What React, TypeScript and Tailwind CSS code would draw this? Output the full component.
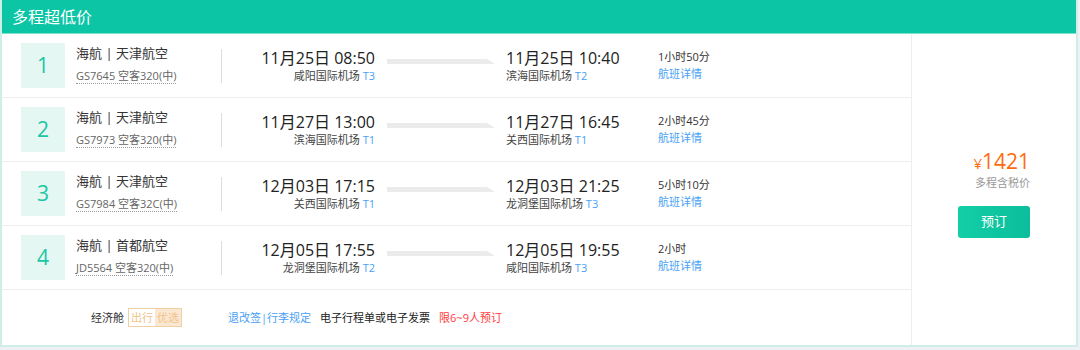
import React from "react";

type Flight = {
  no: number;
  airline: string;
  code: string;
  depTime: string;
  depPort: string;
  depTerm: string;
  arrTime: string;
  arrPort: string;
  arrTerm: string;
  duration: string;
};

const flights: Flight[] = [
  { no: 1, airline: "海航 | 天津航空", code: "GS7645 空客320(中)", depTime: "11月25日 08:50", depPort: "咸阳国际机场", depTerm: "T3", arrTime: "11月25日 10:40", arrPort: "滨海国际机场", arrTerm: "T2", duration: "1小时50分" },
  { no: 2, airline: "海航 | 天津航空", code: "GS7973 空客320(中)", depTime: "11月27日 13:00", depPort: "滨海国际机场", depTerm: "T1", arrTime: "11月27日 16:45", arrPort: "关西国际机场", arrTerm: "T1", duration: "2小时45分" },
  { no: 3, airline: "海航 | 天津航空", code: "GS7984 空客32C(中)", depTime: "12月03日 17:15", depPort: "关西国际机场", depTerm: "T1", arrTime: "12月03日 21:25", arrPort: "龙洞堡国际机场", arrTerm: "T3", duration: "5小时10分" },
  { no: 4, airline: "海航 | 首都航空", code: "JD5564 空客320(中)", depTime: "12月05日 17:55", depPort: "龙洞堡国际机场", depTerm: "T2", arrTime: "12月05日 19:55", arrPort: "咸阳国际机场", arrTerm: "T3", duration: "2小时" },
];

function Arrow() {
  return (
    <svg width="110" height="8" viewBox="0 0 110 8" className="block">
      <polygon points="0,2 100,2 108,7 0,7" fill="#ebebeb" />
    </svg>
  );
}

function FlightRow({ f }: { f: Flight }) {
  return (
    <div className="flex h-[64px] items-center border-b border-[#eeeeee] pl-[19px]">
      <div className="flex h-[45px] w-[44px] items-center justify-center bg-[#e4f7f2] text-[21px] text-[#1cc6a4]">
        {f.no}
      </div>
      <div className="ml-[11px] w-[145px]">
        <div className="text-[13px] leading-[17px] text-[#333]">{f.airline}</div>
        <div className="mt-[2px] inline-block border-b border-dotted border-[#999] text-[11px] leading-[14px] text-[#666]">
          {f.code}
        </div>
      </div>
      <div className="h-[34px] w-px bg-[#dddddd]" />
      <div className="w-[153px] text-right">
        <div className="text-[16px] leading-[19px] text-[#222]">{f.depTime}</div>
        <div className="text-[11px] leading-[15px] text-[#444]">
          {f.depPort} <span className="text-[#4a9ff5]">{f.depTerm}</span>
        </div>
      </div>
      <div className="ml-[12px] mb-[10px]">
        <Arrow />
      </div>
      <div className="ml-[9px] w-[152px]">
        <div className="text-[16px] leading-[19px] text-[#222]">{f.arrTime}</div>
        <div className="text-[11px] leading-[15px] text-[#444]">
          {f.arrPort} <span className="text-[#4a9ff5]">{f.arrTerm}</span>
        </div>
      </div>
      <div>
        <div className="text-[11px] leading-[16px] text-[#333]">{f.duration}</div>
        <div className="mt-[1px] text-[11px] leading-[16px] text-[#4a9ff5]">航班详情</div>
      </div>
    </div>
  );
}

export default function App() {
  return (
    <div
      className="h-[350px] w-[1080px] bg-[#eef1f5]"
      style={{ fontFamily: '"Open Sans", "Noto Sans CJK SC", sans-serif' }}
    >
      <div className="w-[1078px] border-x-2 border-b-2 border-[#cfeee8] bg-white">
        <div className="flex h-[34px] items-center border-b border-[#7fe0cc] bg-[#0cc5a5] pl-[10px] text-[16px] text-white">
          多程超低价
        </div>
        <div className="flex">
          <div className="w-[910px] border-r border-[#eeeeee]">
            {flights.map((f) => (
              <FlightRow key={f.no} f={f} />
            ))}
            <div className="flex h-[55px] items-center pl-[89px] text-[11px] leading-[15px]">
              <span className="text-[#333]">经济舱</span>
              <span className="ml-[4px] flex h-[19px] items-stretch border border-[#f0cfa0] text-[#f0c48a]">
                <span className="flex items-center bg-white px-[2px]">出行</span>
                <span className="flex items-center bg-[#fbe8d2] px-[2px]">优选</span>
              </span>
              <span className="ml-[46px] text-[#4a9ff5]">退改签|行李规定</span>
              <span className="ml-[9px] text-[#222]">电子行程单或电子发票</span>
              <span className="ml-[9px] text-[#ff3b3b]">限6~9人预订</span>
            </div>
          </div>
          <div className="flex flex-1 flex-col items-end justify-center pr-[46px] pt-[8px]">
            <div className="leading-[24px] text-[#ff6a0c]">
              <span className="text-[15px]">¥</span>
              <span className="text-[21px]">1421</span>
            </div>
            <div className="mt-[1px] text-[11px] leading-[14px] text-[#999]">多程含税价</div>
            <button className="mt-[16px] h-[32px] w-[72px] rounded-[3px] bg-gradient-to-r from-[#12cfa6] to-[#0bbd9c] text-[13px] text-white">
              预订
            </button>
          </div>
        </div>
      </div>
    </div>
  );
}
